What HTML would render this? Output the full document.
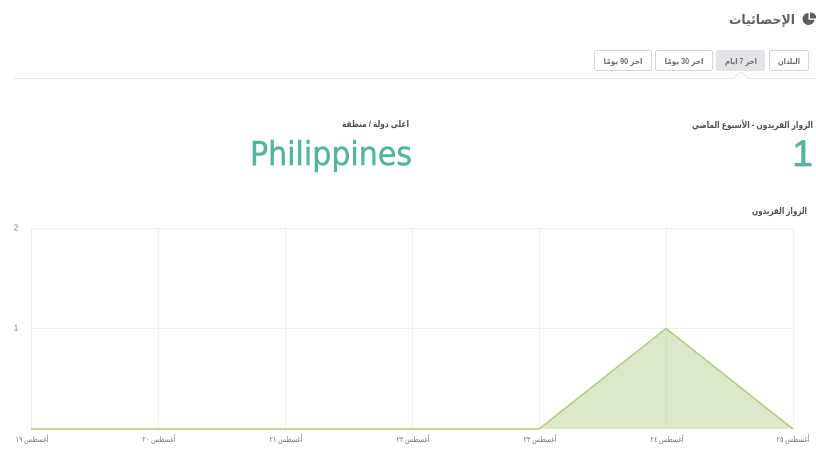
<!DOCTYPE html>
<html lang="ar" dir="rtl">
<head>
<meta charset="utf-8">
<title>الإحصائيات</title>
<style>
html,body{margin:0;padding:0;background:#fff;width:816px;height:457px;overflow:hidden}
svg{display:block;position:absolute;left:0;top:0}
text{font-family:"Liberation Sans","DejaVu Sans",sans-serif}
</style>
</head>
<body>
<svg width="816" height="457" viewBox="0 0 816 457" xmlns="http://www.w3.org/2000/svg">
  <rect width="816" height="457" fill="#fff"/>

  <!-- header -->
  <g fill="#5a6068">
    <path d="M808.500 13a6 6 0 1 0 6 6.800h-6z"/>
    <path d="M810 12.500v6h6v-2.500a6 6 0 0 0-6-3.500z"/>
  </g>
  <text x="795" y="24" text-anchor="start" direction="rtl" font-size="13" font-weight="700" fill="#5a6068" textLength="66" lengthAdjust="spacingAndGlyphs">الإحصائيات</text>

  <!-- tabs -->
  <g fill="#fff" stroke="#d4d6d9">
    <rect x="594.500" y="50.500" width="57" height="20" rx="2"/>
    <rect x="655.500" y="50.500" width="57" height="20" rx="2"/>
    <rect x="769.500" y="50.500" width="39" height="20" rx="2"/>
  </g>
  <rect x="716" y="50" width="49" height="21" rx="2" fill="#e2e4e8"/>
  <g font-size="8" font-weight="700" fill="#6a6e75" text-anchor="middle" direction="rtl">
    <text x="623" y="64" textLength="39" lengthAdjust="spacingAndGlyphs">اخر 90 يومًا</text>
    <text x="684" y="64" textLength="39" lengthAdjust="spacingAndGlyphs">اخر 30 يومًا</text>
    <text x="741" y="64" textLength="32" lengthAdjust="spacingAndGlyphs">اخر 7 ايام</text>
    <text x="789" y="64" textLength="22" lengthAdjust="spacingAndGlyphs">البلدان</text>
  </g>
  <path d="M14 78.500H733.500L741 71.500L748.500 78.500H816" fill="#fff" stroke="#e6e7e9"/>

  <!-- stats -->
  <text x="813" y="128" text-anchor="start" direction="rtl" font-size="9" font-weight="700" fill="#4c5157" textLength="121" lengthAdjust="spacingAndGlyphs">الزوار الفريدون - الأسبوع الماضي</text>
  <text x="409" y="127" text-anchor="start" direction="rtl" font-size="9" font-weight="700" fill="#4c5157" textLength="67" lengthAdjust="spacingAndGlyphs">اعلى دولة / منطقة</text>
  <text x="813" y="166" text-anchor="end" direction="ltr" font-size="37" fill="#52b5a0" stroke="#52b5a0" stroke-width="0.800">1</text>
  <text x="412" y="165" text-anchor="end" direction="ltr" font-size="32.500" fill="#52b5a0" stroke="#52b5a0" stroke-width="0.500" textLength="162" lengthAdjust="spacingAndGlyphs" style='font-family:"DejaVu Sans",sans-serif'>Philippines</text>
  <text x="807" y="214" text-anchor="start" direction="rtl" font-size="9" font-weight="700" fill="#4c5157" textLength="55" lengthAdjust="spacingAndGlyphs">الزوار الفريدون</text>

  <!-- chart grid -->
  <g stroke="#eeeeee" fill="none">
    <path d="M31.500 228V429M158.500 228V429M285.500 228V429M412.500 228V429M539.500 228V429M666.500 228V429M793.500 228V429"/>
    <path d="M31 228.500H794M31 328.500H794"/>
  </g>
  <path d="M539 429L666 328L793 429Z" fill="#dce9c8"/>
  <path d="M666.500 330V429" stroke="#d3e2bd"/>
  <path d="M31 429H539L666 328.500L793 429" fill="none" stroke="#a9cf7f" stroke-width="1.500"/>

  <!-- y labels -->
  <g font-size="8" fill="#777" text-anchor="middle" direction="ltr">
    <text x="16" y="230.500">2</text>
    <text x="16" y="330.500">1</text>
  </g>

  <!-- x labels -->
  <g font-size="8" fill="#777" text-anchor="middle" direction="rtl">
    <text x="32" y="442" textLength="33" lengthAdjust="spacingAndGlyphs">أغسطس ١٩</text>
    <text x="159" y="442" textLength="33" lengthAdjust="spacingAndGlyphs">أغسطس ٢٠</text>
    <text x="286" y="442" textLength="33" lengthAdjust="spacingAndGlyphs">أغسطس ٢١</text>
    <text x="413" y="442" textLength="33" lengthAdjust="spacingAndGlyphs">أغسطس ٢٢</text>
    <text x="540" y="442" textLength="33" lengthAdjust="spacingAndGlyphs">أغسطس ٢٣</text>
    <text x="667" y="442" textLength="33" lengthAdjust="spacingAndGlyphs">أغسطس ٢٤</text>
    <text x="793" y="442" textLength="33" lengthAdjust="spacingAndGlyphs">أغسطس ٢٥</text>
  </g>
</svg>
</body>
</html>
